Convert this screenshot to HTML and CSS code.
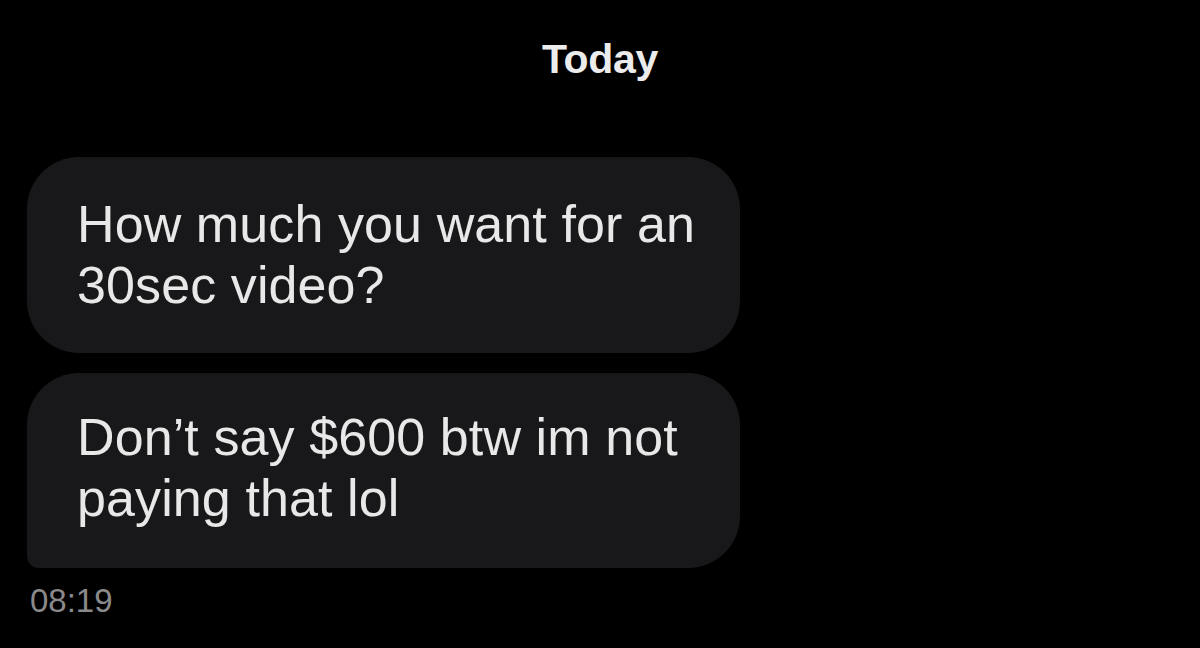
FILE: index.html
```html
<!DOCTYPE html>
<html lang="en">
<head>
    <meta charset="UTF-8">
    <meta name="viewport" content="width=device-width, initial-scale=1.0">
    <title>Messages</title>
    <link rel="stylesheet" href="styles.css">
</head>
<body>

    <div class="chat">
        <div class="day-label">Today</div>
        <div class="messages">
            <div class="bubble">How much you want for an 30sec video?</div>
            <div class="bubble last">Don’t say $600 btw im not paying that lol</div>
        </div>
        <div class="time">08:19</div>
    </div>

</body>
</html>
```

FILE: styles.css
```css
body {
    margin: 0;
    background-color: #000;
    font-family: "Liberation Sans", Arial, sans-serif;
    color: #e8e8e8;
}
.chat {
    padding: 0 27px;
}
.day-label {
    padding-top: 35px;
    font-size: 41px;
    line-height: 48px;
    font-weight: bold;
    text-align: center;
    color: #ececec;
    letter-spacing: -0.3px;
}
.messages {
    margin-top: 74px;
    display: flex;
    flex-direction: column;
    gap: 20px;
}
.bubble {
    width: 638px;
    padding: 37px 25px 37px 50px;
    background-color: #18181a;
    border-radius: 52px;
    font-size: 52px;
    line-height: 61px;
    letter-spacing: 0.1px;
}
.bubble.last {
    padding-top: 34px;
    padding-bottom: 39px;
    border-bottom-left-radius: 12px;
}
.time {
    margin-top: 15px;
    padding-left: 3px;
    font-size: 33px;
    line-height: 36px;
    color: #8a8a8c;
}
```
